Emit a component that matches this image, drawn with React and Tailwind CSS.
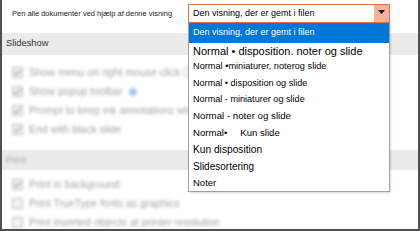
import { useState } from "react";

const options = [
  { label: "Den visning, der er gemt i filen", size: "text-[9px]", h: "h-[20px]" },
  { label: "Normal • disposition. noter og slide", size: "text-[11px]", h: "h-[16px]" },
  { label: "Normal •miniaturer, noterog slide", size: "text-[9.2px]", h: "h-[16.5px]" },
  { label: "Normal • disposition og slide", size: "text-[9.1px]", h: "h-[16.5px]" },
  { label: "Normal - miniaturer og slide", size: "text-[9.1px]", h: "h-[16.5px]" },
  { label: "Normal - noter og slide", size: "text-[9.7px]", h: "h-[16.5px]" },
  { label: "Normal•", extra: "Kun slide", size: "text-[9.6px]", h: "h-[16.5px]" },
  { label: "Kun disposition", size: "text-[10.2px]", h: "h-[16.5px]" },
  { label: "Slidesortering", size: "text-[10px]", h: "h-[16.5px]" },
  { label: "Noter", size: "text-[9.5px]", h: "h-[16.5px]" },
];

const slideshow = [
  { text: "Show menu on right mouse click ⓘ", checked: true },
  { text: "Show popup toolbar", checked: true, info: true },
  { text: "Prompt to keep ink annotations when exiting", checked: true },
  { text: "End with black slide", checked: true },
];

const print = [
  { text: "Print in background", checked: true },
  { text: "Print TrueType fonts as graphics", checked: false },
  { text: "Print inserted objects at printer resolution", checked: false },
];

function Check({ checked }) {
  return (
    <span className="w-[11px] h-[11px] shrink-0 border border-[#bdbdbd] bg-[#f2f2f2] flex items-center justify-center">
      {checked && (
        <svg width="9" height="9" viewBox="0 0 10 10">
          <path d="M1.5 5.2 L4 7.6 L8.6 2.2" fill="none" stroke="#999" strokeWidth="1.4" />
        </svg>
      )}
    </span>
  );
}

function OptionRow({ item }) {
  return (
    <div className="h-[19px] flex items-center gap-[6px] pl-[10px] whitespace-nowrap">
      <Check checked={item.checked} />
      <span className="text-[10.5px] text-[#a3a3a3]">{item.text}</span>
      {item.info && <span className="w-[8px] h-[8px] rounded-full bg-[#a8cbf0] ml-[1px]" />}
    </div>
  );
}

export default function App() {
  const [selected] = useState(0);

  return (
    <div className="w-[420px] h-[231px] overflow-hidden bg-white border-x-2 border-b-2 border-[#4f4f4f] font-['Liberation_Sans',Arial,sans-serif] text-black">
      {/* top row */}
      <div className="h-[33px] flex items-start pt-[4px] pl-[10px]">
        <span className="w-[176px] shrink-0 leading-[19px] text-[7.5px] text-[#222]">
          Pen alle dokumenter ved hjælp af denne visning
        </span>
        <div className="relative w-[202px] shrink-0">
          <div className="h-[19px] flex border border-[#e2704f] bg-white">
            <span className="flex-1 pl-[4px] text-[9px] leading-[17px] whitespace-nowrap">
              {options[selected].label}
            </span>
            <span className="w-[15px] bg-[#f6b39b] flex items-start justify-center pt-[5px]">
              <svg width="7" height="4" viewBox="0 0 7 4">
                <path d="M0 0 H7 L3.5 4 Z" fill="#111" />
              </svg>
            </span>
          </div>
          <div className="absolute z-10 top-[19px] left-0 right-0 bg-white border-x border-b border-[#a0a0a0] shadow-[1px_1px_2px_rgba(0,0,0,0.15)]">
            {options.map((o, i) => (
              <div
                key={i}
                className={`${o.h} ${o.size} flex items-center pl-[4px] whitespace-nowrap ${
                  i === selected ? "bg-[#0078d7] text-white" : "text-black"
                }`}
              >
                {o.label}
                {o.extra && <span className="ml-[13px]">{o.extra}</span>}
              </div>
            ))}
          </div>
        </div>
      </div>

      {/* Slideshow */}
      <div className="h-[22px] bg-[#ebebeb] flex items-center pl-[4px] text-[9.3px] text-[#333]">
        Slideshow
      </div>
      <div className="pt-[8px] pb-[11px] blur-[1.4px]">
        {slideshow.map((s, i) => (
          <OptionRow key={i} item={s} />
        ))}
      </div>

      {/* Print */}
      <div className="h-[20px] bg-[#ebebeb] flex items-center pl-[4px]">
        <span className="text-[9.5px] text-[#a0a0a0] blur-[1.4px]">Print</span>
      </div>
      <div className="pt-[5px] blur-[1.4px]">
        {print.map((s, i) => (
          <OptionRow key={i} item={s} />
        ))}
      </div>
    </div>
  );
}
